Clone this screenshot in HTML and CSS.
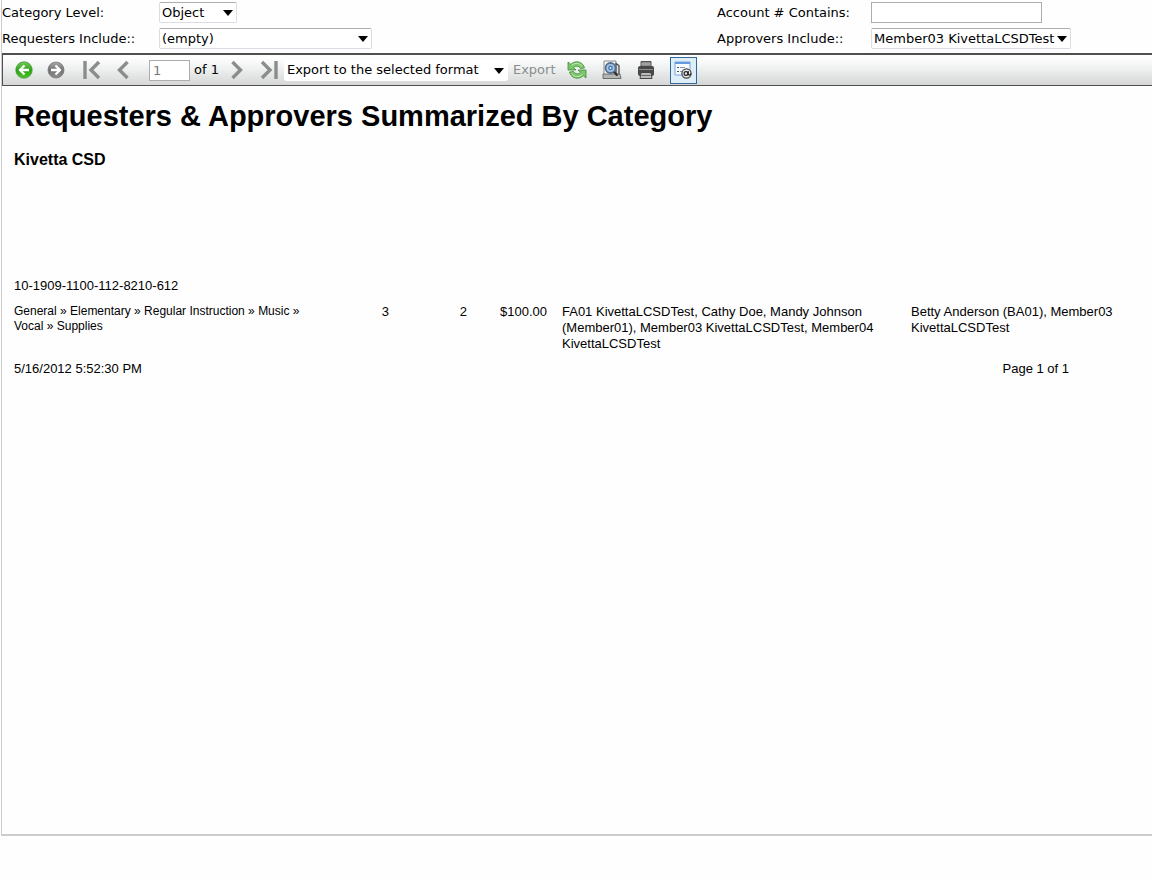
FILE: index.html
```html
<!DOCTYPE html>
<html lang="en">
<head>
<meta charset="utf-8">
<title>Requesters &amp; Approvers Summarized By Category</title>
<link rel="stylesheet" href="styles.css">
</head>
<body>
<main class="viewer">
  <form class="params">
    <label for="level">Category Level:</label>
    <span class="drop drop-level"><select id="level"><option>Object</option></select></span>
    <label for="account">Account # Contains:</label>
    <input class="field account" id="account" type="text">
    <label for="requesters">Requesters Include::</label>
    <span class="drop drop-requesters"><select id="requesters"><option>(empty)</option></select></span>
    <label for="approvers">Approvers Include::</label>
    <span class="drop drop-approvers"><select id="approvers"><option>Member03 KivettaLCSDTest</option></select></span>
  </form>

  <div class="toolbar" role="toolbar" aria-label="Report">
    <div class="group history">
      <button type="button" aria-label="Back">
        <svg width="18" height="18" viewBox="0 0 18 18"><defs><linearGradient id="green" x2="0" y2="1"><stop stop-color="#7acb5c"/><stop offset=".5" stop-color="#2aa414"/><stop offset="1" stop-color="#4fc528"/></linearGradient></defs><circle cx="9" cy="9" r="8.2" fill="url(#green)" stroke="#45943a" stroke-width=".8"/><path d="M14 9H5M9.500 4.500 5 9l4.500 4.500" fill="none" stroke="#fff" stroke-width="2.300"/></svg>
      </button>
      <button type="button" aria-label="Forward">
        <svg width="18" height="18" viewBox="0 0 18 18"><defs><linearGradient id="gray" x2="0" y2="1"><stop stop-color="#aaa"/><stop offset=".5" stop-color="#717171"/><stop offset="1" stop-color="#929292"/></linearGradient></defs><circle cx="9" cy="9" r="8" fill="url(#gray)" stroke="#777" stroke-width=".8"/><path d="M4 9h9M8.500 4.500 13 9l-4.500 4.500" fill="none" stroke="#fff" stroke-width="2.300"/></svg>
      </button>
    </div>
    <div class="group pages">
      <button type="button" aria-label="First page"><svg width="18" height="20" viewBox="0 0 18 20"><path d="M2 1v18M16 2 8 10l8 8" fill="none" stroke="#8c8c8c" stroke-width="3.4"/></svg></button>
      <button class="prev" type="button" aria-label="Previous page"><svg width="12" height="20" viewBox="0 0 12 20"><path d="M10.500 2 2.500 10l8 8" fill="none" stroke="#8c8c8c" stroke-width="3.400"/></svg></button>
      <input class="field page" type="text" value="1" aria-label="Current page">
      <span class="of">of 1</span>
      <button class="next" type="button" aria-label="Next page"><svg width="12" height="20" viewBox="0 0 12 20"><path d="m1.500 2 8 8-8 8" fill="none" stroke="#8c8c8c" stroke-width="3.400"/></svg></button>
      <button type="button" aria-label="Last page"><svg width="18" height="20" viewBox="0 0 18 20"><path d="M16 1v18M2 2l8 8-8 8" fill="none" stroke="#8c8c8c" stroke-width="3.400"/></svg></button>
    </div>
    <span class="drop drop-export"><select aria-label="Export format"><option>Export to the selected format</option></select></span>
    <button class="export" type="button" disabled>Export</button>
    <div class="group actions">
      <button type="button" aria-label="Refresh">
        <svg width="20" height="20" viewBox="0 0 20 20"><g fill="#7cc768" stroke="#3f8b3a" stroke-width=".8" stroke-linejoin="round"><path d="M1 2v8h8L6.500 7.500C9 5.500 12 6 13.500 8.500l4-.5C16 2 9-.5 3.700 4.300z"/><path d="M19 18v-8h-8l2.500 2.500C11 14.500 8 14 6.500 11.500l-4 .5C4 18 11 20.500 16.300 15.700z"/></g><path d="M4.500 5.500c4-3.500 8.500-2.500 10.700 1M15.500 14.500c-4 3.500-8.500 2.500-10.700-1" fill="none" stroke="#c4e9b6"/></svg>
      </button>
      <button type="button" aria-label="Print preview">
        <svg width="20" height="20" viewBox="0 0 20 20"><path d="M2 1h12v14H2z" fill="#f8f8f8" stroke="#8a8a8a"/><path d="M14 3.500l3 2v9h-3z" fill="#ddd" stroke="#444" stroke-width="1.200"/><path d="M1 14h17l1 4.500H1z" fill="#b5b5b5" stroke="#555" stroke-width=".8"/><circle cx="8.500" cy="8" r="5" fill="#a9c8e6" stroke="#52718f" stroke-width="1.800"/><circle cx="8.500" cy="8" r="2.400" fill="#4478b2"/><circle cx="8.500" cy="8" r="1" fill="#e4f1fc"/><path d="m12 12 3.500 3.500" stroke="#333" stroke-width="2.400"/></svg>
      </button>
      <button type="button" aria-label="Print">
        <svg width="18" height="18" viewBox="0 0 18 18"><path d="M4 .5h10V7H4z" fill="#8a8a8a" stroke="#555"/><rect x="1" y="5" width="16" height="10" rx="2" fill="#484848"/><path d="M2 8.500h14" stroke="#8f8f8f"/><path d="M4.500 3h9" stroke="#bbb"/><path d="M4 11.500h10l1 6H3z" fill="#bbb" stroke="#444"/><path d="M4.500 14.500h9" stroke="#666"/></svg>
      </button>
      <button class="toggle" type="button" aria-label="Interactive view" aria-pressed="true">
        <svg width="18" height="18" viewBox="0 0 18 18"><path d="M1 1h15v13H1z" fill="#f7fbff" stroke="#7ba4dc"/><path d="M1 2h15" stroke="#659ae0" stroke-width="2"/><path d="M3 6.500h2M3 10.500h2" stroke="#555"/><path d="M6 6.500h5M6 10.500h2" stroke="#7f9cc4"/><circle cx="12.500" cy="12.500" r="4.600" fill="#e6e8ea" stroke="#444" stroke-width="1.200"/><circle cx="12" cy="12.500" r="1.900" fill="none" stroke="#222" stroke-width="1.200"/><path d="M14.200 10v3.500q1.500 1.500 2.800-1" fill="none" stroke="#222" stroke-width="1.200"/></svg>
      </button>
    </div>
  </div>

  <article class="report">
    <h1>Requesters &amp; Approvers Summarized By Category</h1>
    <h2>Kivetta CSD</h2>
    <table class="lines">
      <colgroup><col class="c-category"><col class="c-count"><col class="c-count"><col class="c-amount"><col class="c-requesters"><col></colgroup>
      <tbody>
        <tr><th colspan="6">10-1909-1100-112-8210-612</th></tr>
        <tr>
          <td class="category">General » Elementary » Regular Instruction » Music » Vocal » Supplies</td>
          <td class="number">3</td>
          <td class="number">2</td>
          <td class="number">$100.00</td>
          <td class="people">FA01 KivettaLCSDTest, Cathy Doe, Mandy Johnson (Member01), Member03 KivettaLCSDTest, Member04 KivettaLCSDTest</td>
          <td class="people">Betty Anderson (BA01), Member03 KivettaLCSDTest</td>
        </tr>
      </tbody>
    </table>
    <footer><span>5/16/2012 5:52:30 PM</span><span>Page 1 of 1</span></footer>
  </article>
</main>
</body>
</html>
```
FILE: styles.css
```css
* { box-sizing: border-box; }
body {
  margin: 0;
  min-height: 100vh;
  padding: 0 0 45px 1px;
  display: flex;
  background: #fefefe;
  color: #000;
  font: 13px/16px "DejaVu Sans", Verdana, sans-serif;
}
button, input, select { font: inherit; color: inherit; }
button {
  display: flex;
  align-items: center;
  justify-content: center;
  padding: 0;
  border: 0;
  background: none;
}
svg { display: block; }

.viewer {
  flex: 1;
  min-width: 0;
  border-left: 1px solid #ccc;
  border-bottom: 2px solid #ccc;
}

.params {
  display: grid;
  grid-template-columns: 157px minmax(0, 558fr) 154px minmax(0, 281fr);
  grid-auto-rows: 21px;
  row-gap: 5px;
  align-items: center;
  justify-items: start;
  padding: 2px 0 4px;
}
.field {
  height: 21px;
  padding: 0 3px;
  border: 1px solid #abadb3;
  background: #fff;
}
.account { width: 171px; }

.drop {
  position: relative;
  display: block;
  height: 21px;
}
.drop select {
  appearance: none;
  width: 100%;
  height: 100%;
  padding: 0 2px;
  border: 1px solid #dcdde4;
  border-top-color: #abadb3;
  border-radius: 2px;
  background: #fff;
}
.drop::after {
  content: "";
  position: absolute;
  top: 8px;
  right: 4px;
  border: 5px solid transparent;
  border-top: 6px solid #000;
  border-bottom: 0;
  pointer-events: none;
}
.drop-level { width: 78px; }
.drop-requesters { width: 213px; }
.drop-approvers { width: 200px; }
.drop-export { width: 224px; }
.drop-export select { border-color: #fff; }

.toolbar {
  display: flex;
  align-items: center;
  height: 33px;
  padding-left: 12px;
  border: solid #505050;
  border-width: 2px 0 1px 1px;
  background: linear-gradient(#fefefe 10%, #ecefef 50%, #d6d6d6);
}
.group { display: flex; align-items: center; }
.history { gap: 14px; margin-right: 18px; }
.pages { margin-right: 6px; }
.prev { margin: 0 20px 0 16px; }
.page { width: 41px; color: #777; }
.of { margin-left: 4px; }
.next { margin: 0 17px 0 12px; }
.export { margin: 0 11px 0 5px; color: #8c8c8c; }
.actions { gap: 15px; }
.toggle {
  width: 27px;
  height: 27px;
  border: 1px solid #336699;
  background: #ddeef7;
}

.report {
  padding: 12px 12px 0;
  font-family: "Liberation Sans", Arial, sans-serif;
}
h1 { margin: 0; font-size: 29px; line-height: 36px; }
h2 { margin: 16px 0 108px; font-size: 16px; line-height: 20px; }
.lines {
  width: 100%;
  table-layout: fixed;
  border-collapse: collapse;
}
.c-category { width: 297px; }
.c-count { width: 78px; }
.c-amount { width: 80px; }
.c-requesters { width: 349px; }
th, td { padding: 0; text-align: left; vertical-align: top; font-weight: normal; }
th { padding-bottom: 10px; }
.category { font-size: 12px; line-height: 15px; }
.number { text-align: right; }
.people { padding: 0 15px; }
footer {
  display: flex;
  justify-content: space-between;
  margin-top: 9px;
  padding-right: 71px;
}
```
